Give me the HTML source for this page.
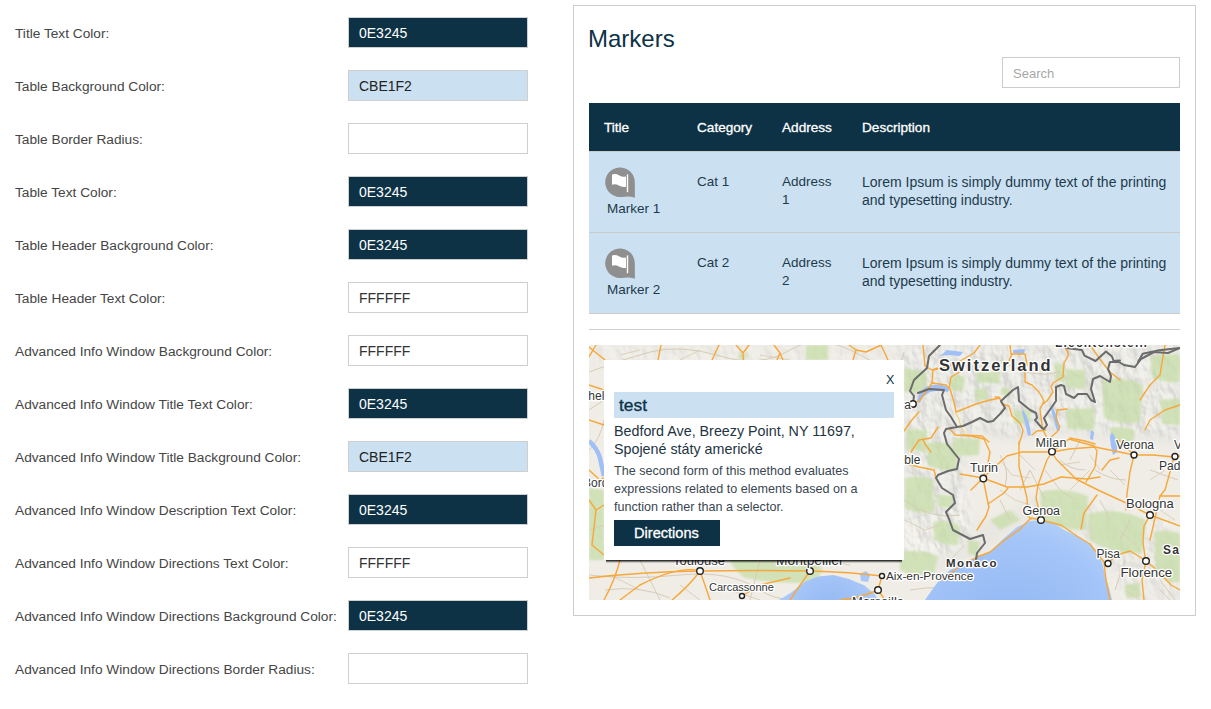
<!DOCTYPE html>
<html><head><meta charset="utf-8">
<style>
*{margin:0;padding:0;box-sizing:border-box}
html,body{width:1211px;height:709px;overflow:hidden;background:#fff;font-family:"Liberation Sans",sans-serif}
.lab{position:absolute;left:15px;font-size:13.7px;color:#454545;white-space:nowrap}
.inp{position:absolute;left:348px;width:180px;height:31px;border:1px solid #cfcfcf;font-size:14px;padding-left:10px;line-height:31px;color:#333}
.d{background:#0E3245;color:#fff}
.l{background:#CBE1F2;color:#222}
.panel{position:absolute;left:573px;top:5px;width:623px;height:611px;border:1px solid #cdcdcd}
.abs{position:absolute}
.h1{position:absolute;left:588px;top:25px;font-size:24px;color:#0E3245;white-space:nowrap}
.search{position:absolute;left:1002px;top:57px;width:178px;height:31px;border:1px solid #cccccc;font-size:13px;color:#a8a8a8;padding-left:10px;line-height:31px}
.thead{position:absolute;left:589px;top:103px;width:591px;height:48px;background:#0E3245}
.th{position:absolute;top:120px;font-size:13.6px;color:#fff;white-space:nowrap;-webkit-text-stroke:.3px #fff}
.row{position:absolute;left:589px;width:591px;background:#CBE1F2}
.hl{position:absolute;left:589px;width:591px;height:1px;background:#cacaca}
.td{position:absolute;font-size:13.5px;color:#1e3a4a;white-space:nowrap;line-height:18px}
.map{position:absolute;left:589px;top:345px;width:591px;height:255px;overflow:hidden;background:#ece8e0}
.pop{position:absolute;left:604px;top:360px;width:300px;height:200px;background:#fff}
</style></head><body>
<div class="lab" style="top:26px">Title Text Color:</div>
<div class="inp d" style="top:17px">0E3245</div>
<div class="lab" style="top:79px">Table Background Color:</div>
<div class="inp l" style="top:70px">CBE1F2</div>
<div class="lab" style="top:132px">Table Border Radius:</div>
<div class="inp" style="top:123px"></div>
<div class="lab" style="top:185px">Table Text Color:</div>
<div class="inp d" style="top:176px">0E3245</div>
<div class="lab" style="top:238px">Table Header Background Color:</div>
<div class="inp d" style="top:229px">0E3245</div>
<div class="lab" style="top:291px">Table Header Text Color:</div>
<div class="inp" style="top:282px">FFFFFF</div>
<div class="lab" style="top:344px">Advanced Info Window Background Color:</div>
<div class="inp" style="top:335px">FFFFFF</div>
<div class="lab" style="top:397px">Advanced Info Window Title Text Color:</div>
<div class="inp d" style="top:388px">0E3245</div>
<div class="lab" style="top:450px">Advanced Info Window Title Background Color:</div>
<div class="inp l" style="top:441px">CBE1F2</div>
<div class="lab" style="top:503px">Advanced Info Window Description Text Color:</div>
<div class="inp d" style="top:494px">0E3245</div>
<div class="lab" style="top:556px">Advanced Info Window Directions Text Color:</div>
<div class="inp" style="top:547px">FFFFFF</div>
<div class="lab" style="top:609px">Advanced Info Window Directions Background Color:</div>
<div class="inp d" style="top:600px">0E3245</div>
<div class="lab" style="top:662px">Advanced Info Window Directions Border Radius:</div>
<div class="inp" style="top:653px"></div>

<div class="panel"></div>
<div class="h1">Markers</div>
<div class="search">Search</div>
<div class="thead"></div>
<div class="th" style="left:604px">Title</div>
<div class="th" style="left:697px">Category</div>
<div class="th" style="left:782px">Address</div>
<div class="th" style="left:862px">Description</div>
<div class="hl" style="top:151px"></div>
<div class="row" style="top:152px;height:80px"></div>
<div class="hl" style="top:232px"></div>
<div class="row" style="top:233px;height:80px"></div>
<div class="hl" style="top:313px"></div>
<div class="hl" style="top:329px;background:#d0d0d0"></div>

<!-- row 1 -->
<svg class="abs" style="left:604px;top:166px" width="33" height="33" viewBox="0 0 33 33">
<path d="M30.8 16.3 A14.8 14.8 0 1 0 18 30.95 Q25 29.5 30.9 31.8 Z" fill="#8f8f8f"/>
<path d="M8 8.6 C10 7.6 12.5 7.8 15 9.2 S20 11 22 10.5 V20.8 C20 21.3 17.5 20.8 15 19.5 S10 17.8 8 18.8 Z" fill="#fff"/>
<rect x="22.8" y="8.4" width="1.4" height="17.8" fill="#fff"/>
</svg>
<div class="td" style="left:607px;top:200px">Marker 1</div>
<div class="td" style="left:697px;top:173px">Cat 1</div>
<div class="td" style="left:782px;top:173px">Address<br>1</div>
<div class="td" style="left:862px;top:173px;font-size:14px">Lorem Ipsum is simply dummy text of the printing<br>and typesetting industry.</div>
<!-- row 2 -->
<svg class="abs" style="left:604px;top:247px" width="33" height="33" viewBox="0 0 33 33">
<path d="M30.8 16.3 A14.8 14.8 0 1 0 18 30.95 Q25 29.5 30.9 31.8 Z" fill="#8f8f8f"/>
<path d="M8 8.6 C10 7.6 12.5 7.8 15 9.2 S20 11 22 10.5 V20.8 C20 21.3 17.5 20.8 15 19.5 S10 17.8 8 18.8 Z" fill="#fff"/>
<rect x="22.8" y="8.4" width="1.4" height="17.8" fill="#fff"/>
</svg>
<div class="td" style="left:607px;top:281px">Marker 2</div>
<div class="td" style="left:697px;top:254px">Cat 2</div>
<div class="td" style="left:782px;top:254px">Address<br>2</div>
<div class="td" style="left:862px;top:254px;font-size:14px">Lorem Ipsum is simply dummy text of the printing<br>and typesetting industry.</div>

<div class="map" id="map">
<svg width="591" height="255" viewBox="589 345 591 255" style="position:absolute;left:0;top:0">
<defs>
<radialGradient id="sea" cx="1010" cy="650" r="150" gradientUnits="userSpaceOnUse">
<stop offset="0" stop-color="#8db3f3"/><stop offset=".75" stop-color="#a4c5f8"/><stop offset="1" stop-color="#b8d3fb"/>
</radialGradient>
<radialGradient id="sea2" cx="830" cy="610" r="60" gradientUnits="userSpaceOnUse">
<stop offset="0" stop-color="#92b7f4"/><stop offset="1" stop-color="#b2cefa"/>
</radialGradient>
<filter id="soft" x="-10%" y="-10%" width="120%" height="120%"><feGaussianBlur stdDeviation="1.2"/></filter>
<filter id="soft2" x="-5%" y="-10%" width="110%" height="120%"><feGaussianBlur stdDeviation="4"/></filter>
<filter id="tex" x="589" y="345" width="591" height="255" filterUnits="userSpaceOnUse" primitiveUnits="userSpaceOnUse">
<feTurbulence type="fractalNoise" baseFrequency="0.09 0.06" numOctaves="3" seed="7" result="n"/>
<feColorMatrix in="n" type="matrix" values="0 0 0 0 1  0 0 0 0 1  0 0 0 0 1  0 0 0 0 0" result="w"/>
<feDiffuseLighting in="n" surfaceScale="6" lighting-color="#fff" result="l"><feDistantLight azimuth="315" elevation="40"/></feDiffuseLighting>
<feColorMatrix in="l" type="matrix" values="0.35 0 0 0 0.62  0.35 0 0 0 0.62  0.33 0 0 0 0.6  0 0 0 0 1"/>
</filter>
<mask id="mtn" maskUnits="userSpaceOnUse" x="589" y="345" width="591" height="255"><g fill="#fff" filter="url(#soft3)">
<path d="M904 345 H1180 V440 Q1150 436 1120 432 Q1090 434 1065 428 Q1040 426 1020 436 Q1000 436 985 428 Q970 436 965 466 Q962 500 975 530 Q960 560 904 560 Z"/>
<path d="M1035 495 Q1070 490 1100 505 Q1140 520 1180 520 V600 H1120 Q1115 570 1100 550 Q1080 535 1050 522 Q1035 515 1035 495Z" fill="#999"/>
<path d="M589 345 H904 V362 H589Z" fill="#777"/>
<path d="M589 480 H604 V560 H589Z" fill="#777"/>
</g></mask>
<filter id="soft3" x="-10%" y="-10%" width="120%" height="120%"><feGaussianBlur stdDeviation="5"/></filter>
</defs>
<rect x="589" y="345" width="591" height="255" fill="#f0ede7"/>
<!-- mountain shading -->
<g fill="#e5e4df" filter="url(#soft2)">
<path d="M904 345 H1180 V445 Q1150 440 1120 436 Q1090 438 1065 432 Q1040 430 1020 440 Q1000 440 985 432 Q970 440 965 470 Q960 500 955 520 Q940 530 904 520 Z"/>
<path d="M589 345 H904 V360 H589Z" fill="#eeebe5"/>
<path d="M930 540 Q960 520 990 520 Q1020 505 1040 495 Q1080 500 1110 520 Q1150 530 1180 530 V600 H1130 Q1110 560 1090 540 Q1060 528 1040 522 Q1010 528 985 552 Q960 565 935 575Z" fill="#e9e7e1"/>
</g>
<rect x="589" y="345" width="591" height="255" filter="url(#tex)" mask="url(#mtn)" opacity=".6"/>
<!-- greens -->
<g fill="#c6dda6" filter="url(#soft)" opacity=".72">
<path d="M806 345 H828 V360 H806Z"/>
<path d="M740 352 L748 355 L744 360 L738 358Z"/>
<path d="M589 488 L604 490 V560 H589Z"/>
<path d="M904 368 L927 372 L926 394 L904 392Z"/>
<path d="M950 376 Q958 372 965 378 L963 391 Q955 393 950 388Z"/>
<path d="M974 389 L987 388 L988 400 L976 401Z"/>
<path d="M976 372 L1000 371 L1000 383 L977 383Z"/>
<path d="M1001 387 L1010 388 L1010 396 L1001 395Z"/>
<path d="M906 429 L927 430 L926 452 L906 450Z"/>
<path d="M927 443 Q945 440 957 448 L956 470 Q940 472 928 465Z"/>
<path d="M953 438 L980 439 L979 455 L956 456Z"/>
<path d="M905 478 Q920 474 933 480 L934 512 Q918 515 905 508Z"/>
<path d="M937 494 L953 496 L952 508 L938 507Z"/>
<path d="M933 522 Q948 518 960 526 L958 545 Q945 546 934 540Z"/>
<path d="M968 540 L980 542 L978 556 L968 554Z"/>
<path d="M990 520 L1010 510 L1020 520 L1000 530Z"/>
<path d="M900 552 Q920 548 938 556 L934 575 Q915 578 900 570Z"/>
<path d="M1013 410 L1031 411 L1030 424 L1014 424Z"/>
<path d="M1054 363 L1065 364 L1065 382 L1055 381Z"/>
<path d="M1066 369 L1085 370 L1086 389 L1066 388Z"/>
<path d="M1066 409 L1095 408 L1094 430 L1067 429Z"/>
<path d="M1102 380 Q1125 376 1143 385 L1140 422 Q1120 426 1104 418Z"/>
<path d="M1110 428 Q1122 425 1135 430 L1133 444 Q1120 446 1111 440Z"/>
<path d="M1150 357 Q1165 352 1180 355 V382 Q1165 384 1152 377Z"/>
<path d="M1160 400 L1180 398 V425 L1162 424Z"/>
<path d="M1040 492 Q1060 486 1088 496 L1086 530 Q1065 530 1042 522Z"/>
<path d="M1088 514 Q1115 506 1146 520 L1142 553 Q1115 556 1090 540Z"/>
<path d="M1154 532 Q1168 528 1180 534 V582 Q1166 584 1156 572Z"/>
<path d="M729 558 Q760 552 800 556 Q815 560 823 570 L815 582 Q780 585 745 578 Q733 570 729 558Z"/>
<path d="M1125 585 L1140 583 L1140 598 L1126 598Z"/>
</g>
<!-- secondary roads -->
<g fill="none" stroke="#d6ccb8" stroke-width="1">
<path d="M589 372 Q620 360 650 352 T720 356 T790 350 T860 355 T904 352"/>
<path d="M604 420 Q600 440 589 450 M589 410 L604 400 M589 530 L604 525"/>
<path d="M589 575 Q630 580 680 575 T760 590 T820 585"/>
<path d="M605 590 Q640 585 670 598 M640 560 L660 600 M760 560 L750 600"/>
<path d="M1000 455 Q1010 470 1005 486 M1060 460 Q1070 470 1085 470 M1030 470 L1045 500 M1095 470 Q1110 480 1126 480 M1000 500 L1010 520"/>
<path d="M904 500 Q930 520 960 515 M1150 470 L1178 480 M1120 540 L1130 520 M1160 540 L1175 550 M1125 560 L1115 590 M1160 580 L1175 600"/>
<path d="M1000 360 Q1030 380 1060 372 M1070 460 L1080 440 M1020 490 L1030 470"/>
<path d="M910 590 Q940 585 960 590 M960 590 L980 600"/>
</g>
<g fill="none" stroke="#d9cdb6" stroke-width=".9">
<path d="M1000 490 L1015 500 L1030 505 M1045 470 L1060 490 L1075 500 M1090 455 L1100 470 M1110 470 L1125 485 M1000 460 L1012 475 L1030 478 M1060 465 L1080 462 M1150 480 L1165 470 M1100 500 L1110 520 M1020 455 L1035 470 M1070 490 L1090 470"/>
<path d="M905 520 L925 530 L940 525 M950 560 L965 545 M1120 530 L1135 545 M1160 510 L1175 520 M1125 590 L1140 600 M1160 590 L1170 600"/>
<path d="M620 355 L640 350 M680 360 L700 350 M760 355 L790 360 M610 575 L640 590 M680 585 L700 600 M730 590 L760 600 M820 560 L850 565"/>
</g>
<!-- sea -->
<path d="M925 600 L932 590 L940 579 L950 570 L966 562 L977 557 L990 552 L1002 540 L1017 527 L1030 521 L1041 520 L1055 524 L1064 530 L1077 536 L1086 541 L1097 551 L1102 562 L1105 575 L1109 588 L1112 600 Z" fill="url(#sea)"/>
<path d="M779 600 L792 592 L805 581.6 L818 576.4 L833.5 575 L849 579 L864.7 585.5 L875 594.6 L877.8 600 Z" fill="url(#sea2)"/>
<path d="M860 574 L866 571 L870 575 L868 582 L861 581Z" fill="#a9c7f8"/>
<!-- lakes / rivers -->
<g fill="#9fbff6">
<path d="M917 402 Q918 392 926 387 Q936 383 946 386 Q950 389 948 392 Q938 390 930 392 Q922 396 920 403Z"/>
<path d="M940 356 L947 350 L963 352 L960 356 L948 355Z"/>
<path d="M1013 350 L1025 349 L1024 354 L1013 353Z"/>
<path d="M1023 410 Q1030 420 1031 435 L1028 436 Q1025 422 1022 412Z"/>
<path d="M1052 407 Q1058 415 1060 430 L1057 431 Q1053 418 1051 409Z"/>
<path d="M1112 432 Q1118 440 1117 452 L1113 455 Q1110 445 1110 436Z"/>
<path d="M1091 430 L1094 432 L1093 440 L1090 439Z"/>
</g>
<path d="M589 441 Q597 448 600 458 Q602 468 604 476" fill="none" stroke="#9fbff6" stroke-width="4.5"/>
<!-- highways -->
<g fill="none" stroke="#f6a83a" stroke-width="1.4" stroke-linecap="round" stroke-linejoin="round">
<path d="M589 347 L605 360 M596 345 L589 357"/>
<path d="M661 345 L658 360 M719 345 L712 360"/>
<path d="M736 345 L743 353 L743.5 360 M749 345 L743 353"/>
<path d="M774 345 L780 353 L777 360 M780 353 L783 360"/>
<path d="M849 345 L856 350 L853 360 M856 350 L866 352 L877 347 L881 345 L888 360"/>
<path d="M589 385 L604 390 M589 420 L604 425 M589 470 L600 480 L604 478"/>
<path d="M589 500 L596 510 L604 505 M596 510 L592 545 L604 555"/>
<path d="M589 578 Q640 572 700 571 Q760 570 810 571 Q850 572 882 576"/>
<path d="M700 571 Q705 585 710 600 M700 571 Q690 585 672 600 M700 571 Q680 565 640 585 L620 600"/>
<path d="M810 571 Q800 585 790 600 M742 596 L760 585 L790 578"/>
<path d="M882 576 L878 590 L885 600 M878 590 Q860 598 840 600"/>
<path d="M620 560 Q615 580 604 600"/>
<!-- switzerland / western alps -->
<path d="M923 345 L925 366 L932 370 L938 368"/>
<path d="M904 406 L913 404 L920 400 L932 383 L946 385 L950 389 L954 402 L956 412 L976 404 L990 400 L1000 398"/>
<path d="M932 383 L933 370 L946 367 L955 364 L974 353 L980 345"/>
<path d="M949 389 L951 377 L963 370"/>
<path d="M950 429 L955 435 L971 436 L984 439 L990 452 L988 463 L983 478"/>
<path d="M904 431 L911 421 L919 412"/>
<path d="M911 452 L919 440 L931 438 L938 427"/>
<path d="M923 440 L925 444 L931 452"/>
<path d="M904 463 L919 467 L934 470 L936 478"/>
<path d="M1010 345 L1011 354 L1025 354 L1027 365"/>
<path d="M1008 363 L1012 354"/>
<path d="M1063 345 L1068 352 L1068 356 L1064 363 L1063 377 L1053 383 L1051 387 L1053 392 L1047 401 L1043 404"/>
<path d="M1025 372 L1025 382 L1032 385 L1039 392 L1044 401 L1040 409 L1042 425 L1043 430 L1048 440 L1052 451"/>
<path d="M995 397 L999 397 L1002 404 L1009 406 L1012 416 L1020 423 L1023 430 L1022 435 L1019 444"/>
<path d="M1057 410 L1067 409 M1057 410 L1056 420 L1060 427 L1057 432 L1051 437"/>
<path d="M1070 438 L1085 441 L1095 444"/>
<path d="M1032 435 L1037 431 L1046 430"/>
<path d="M1090 345 Q1100 360 1110 372 L1120 380"/>
<path d="M1140 400 L1150 385 L1160 375 L1165 345"/>
<path d="M1145 430 L1150 420 L1165 410 L1180 405"/>
<!-- po valley -->
<path d="M983 478 L999 463 L1007 456 L1022 452 L1052 452 L1069 449 L1095 447 L1134 455 L1153 455 L1174 457 L1180 456"/>
<path d="M1052 452 L1069 439 L1094 446 L1097 451 L1095 467 L1086 482"/>
<path d="M1052 452 L1056 459 L1076 479 L1100 491 L1122 501 L1150 515 L1180 526"/>
<path d="M1052 452 L1047 460 L1038 485 L1036 498 L1041 519"/>
<path d="M983 478 L1007 487 L1027 487 L1044 484 L1061 477 L1087 479 L1100 477"/>
<path d="M1019 442 L1019 467 L1025 490 L1027 498 L1028 516 L1031 519"/>
<path d="M983 478 L987 498 L989 507 L986 516 L977 530"/>
<path d="M988 504 L1004 493 L1008 488"/>
<path d="M983 478 L960 474 M983 478 L971 490"/>
<path d="M989 442 L982 436 L963 435"/>
<path d="M1081 529 L1084 513 L1097 495"/>
<path d="M1134 455 L1130 472 L1127 494 L1126 510"/>
<path d="M1134 455 L1119 440"/>
<path d="M1150 515 L1144 526 L1143 542 L1145 557 L1146 561 L1142 580 L1144 600"/>
<path d="M1146 561 L1158 571 L1171 585 L1180 590"/>
<path d="M1108 563 L1117 555 L1130 551 L1140 557 L1146 561"/>
<path d="M1090 544 L1104 562 L1106 580 L1110 600"/>
<path d="M1174 457 L1170 472 L1165 490 L1160 496 L1180 496"/>
<path d="M1160 496 L1150 540"/>
<path d="M1041 520 L1031 518 L1019 530 M1041 520 L1061 525 L1077 536 L1090 544"/>
<path d="M1019 530 L1002 542 L990 552 L977 557 L960 566 L942 580"/>
<path d="M1102 470 L1110 460 L1119 458"/>
</g>
<g fill="none" stroke="#f1d27a" stroke-width="1.2">
<path d="M955 412 L959 419 L961 427 L965 433"/>
</g>
<!-- borders -->
<g fill="none" stroke="#6b6b6b" stroke-width="2" stroke-linejoin="round" stroke-linecap="round">
<path d="M940 345 L929 356 L927 368 L914 380 L910 391 L914 396 L913 403"/>
<path d="M918 393 L929 389 L944 390 L942 395 L946 410 L951 417 L957 427 L946 429 L944 433 L947 444 L955 454 L959 459 L957 469 L948 471 L938 475 L936 478 L942 488 L953 495 L955 503 L946 512 L949 519 L953 530 L970 539 L983 535 L985 543 L977 553 L976 560"/>
<path d="M957 427 L963 426 L972 422 L980 418 L988 422 L993 421 L1000 414 L1005 408 L1001 401 L1013 390 L1018 387 L1019 401 L1030 410 L1036 413 L1037 418 L1035 420 L1042 428 L1044 429 L1047 425 L1044 418 L1049 411 L1056 401 L1056 387 L1061 385 L1064 386 L1066 394 L1074 398 L1078 394 L1087 394 L1091 400 L1095 402 L1091 389 L1093 379 L1100 376 L1110 382 L1111 376 L1108 369 L1110 362 L1119 362 L1124 365 L1135 367 L1141 359 L1154 352 L1168 353 L1180 348"/>
<path d="M1066 348 L1082 350 L1084.5 355.6 L1095.5 361 L1101 356 L1106 351.5 L1112 356.5 L1113.6 361 L1120 360.6"/>
<path d="M1138 362 L1142.7 353.8 L1151 352 L1157 350.6 L1180 348"/>
</g>
<!-- city dots -->
<g fill="#fff" stroke="#222" stroke-width="1.4">
<circle cx="1052" cy="451.5" r="3.3"/>
<circle cx="1134" cy="455" r="3"/>
<circle cx="1175" cy="456.5" r="3"/>
<circle cx="983.3" cy="478.5" r="3.3"/>
<circle cx="1041" cy="520" r="3.3"/>
<circle cx="1150" cy="515" r="3.3"/>
<circle cx="1108" cy="563.5" r="3"/>
<circle cx="1146" cy="561" r="3.3"/>
<circle cx="882" cy="576" r="2.5"/>
<circle cx="878" cy="590" r="3.3"/>
<circle cx="700" cy="571" r="3.3"/>
<circle cx="810" cy="571" r="3.3"/>
<circle cx="742" cy="596" r="2.5"/>
<circle cx="913" cy="404" r="3.2"/>
</g>
<!-- labels -->
<g font-family="Liberation Sans" fill="#333" stroke="#fff" stroke-width="2.5" paint-order="stroke" stroke-linejoin="round">
<text x="939" y="371" font-size="16.5" font-weight="bold" letter-spacing="2">Switzerland</text>
<text x="946" y="567" font-size="11.5" font-weight="bold" letter-spacing="1.4">Monaco</text>
<text x="1163" y="554" font-size="12" font-weight="bold" letter-spacing="1.2">Sa</text>
<text x="1035.5" y="447" font-size="12.5" letter-spacing=".3">Milan</text>
<text x="1116" y="449" font-size="12">Verona</text>
<text x="1174" y="449" font-size="12">V</text>
<text x="1159" y="470" font-size="12">Padua</text>
<text x="970" y="471.5" font-size="12.5">Turin</text>
<text x="1022.5" y="514.5" font-size="12.5">Genoa</text>
<text x="1126" y="508" font-size="13">Bologna</text>
<text x="1096.5" y="557.5" font-size="12">Pisa</text>
<text x="1120.5" y="576.5" font-size="13.3">Florence</text>
<text x="886" y="580" font-size="11.8">Aix-en-Provence</text>
<text x="709" y="591" font-size="11">Carcassonne</text>
<text x="673" y="565" font-size="13">Toulouse</text>
<text x="776" y="565" font-size="13.8">Montpellier</text>
<text x="852" y="606" font-size="13">Marseille</text>
<text x="1055" y="347" font-size="12" font-weight="bold" letter-spacing="1.2">Liechtenstein</text>
<text x="567" y="399.5" font-size="12">Rochelle</text>
<text x="583" y="487" font-size="12">Bordeaux</text>
<text x="871" y="464" font-size="12">Grenoble</text>
<text x="869" y="408.5" font-size="12">Geneva</text>
</g>
</svg>
</div>
<div class="pop"></div>
<div class="abs" style="left:606px;top:560px;width:296px;height:3px;background:linear-gradient(rgba(0,0,0,.95),rgba(0,0,0,0))"></div>
<div class="abs" style="left:886px;top:373px;font-size:12.5px;color:#0E3245">X</div>
<div class="abs" style="left:614px;top:392px;width:280px;height:26px;background:#CBE1F2"></div>
<div class="abs" style="left:619px;top:395px;font-size:17.4px;color:#0E3245;-webkit-text-stroke:.35px #0E3245;white-space:nowrap">test</div>
<div class="abs" style="left:614px;top:422px;font-size:14.3px;line-height:18px;color:#1e3442;white-space:nowrap">Bedford Ave, Breezy Point, NY 11697,<br>Spojené státy americké</div>
<div class="abs" style="left:614px;top:462px;font-size:12.6px;line-height:18px;color:#3a4651;white-space:nowrap">The second form of this method evaluates<br>expressions related to elements based on a<br>function rather than a selector.</div>
<div class="abs" style="left:614px;top:520px;width:106px;height:26px;background:#0E3245"></div>
<div class="abs" style="left:634px;top:525px;font-size:14.6px;color:#fff;white-space:nowrap;-webkit-text-stroke:.3px #fff">Directions</div>
</body></html>
